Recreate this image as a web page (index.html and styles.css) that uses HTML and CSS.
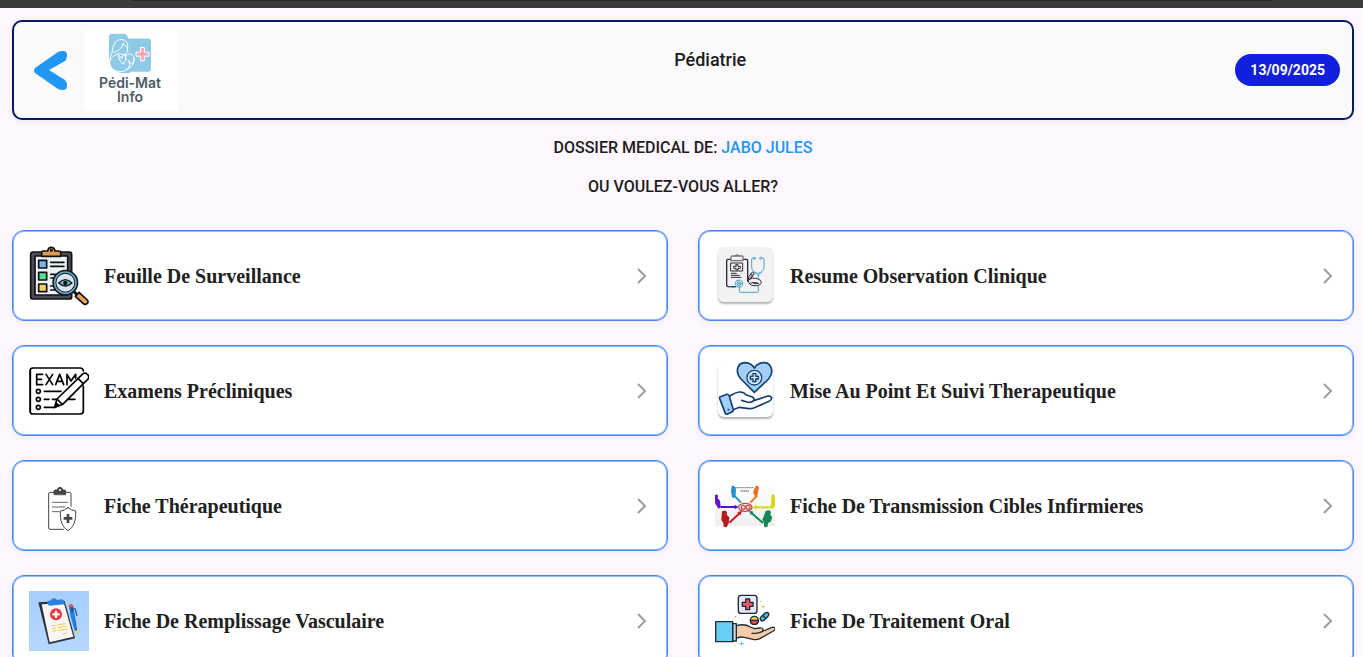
FILE: index.html
```html
<!DOCTYPE html>
<html lang="fr">
<head>
<meta charset="utf-8">
<meta name="viewport" content="width=device-width, initial-scale=1">
<title>Pédiatrie</title>
<link rel="stylesheet" href="styles.css">
</head>
<body>
<div class="topbar"></div>
<header class="header">
  <button class="back" type="button" aria-label="Retour">
    <svg class="back-icon" viewBox="0 0 34 40"><path d="M1 18 24 2q2-1 5-1 4 0 4 4 0 4-2 6L15 20l16 10q2 2 2 6 0 4-4 4-3 0-5-1L1 23q-2-2 0-5z" fill="#2196f3"/></svg>
  </button>
  <div class="logo">
    <svg class="logo-icon" viewBox="327 100 132 122">
      <path d="M330 112q0-10 10-10h34q7 0 11 7l4 7h58q9 0 9 9v82q0 9-9 9h-48q-12 6-28 4-41-5-41-47z" fill="#8ecae6"/>
      <g fill="none" stroke="#fff" stroke-width="3" stroke-linecap="round" stroke-linejoin="round">
        <path d="M386 150q4-29-17-31c-20-1-27 17-28 30-1 14-10 20-9 36"/>
        <path d="M342 157c11 0 28-9 30-27 4 9 15 10 14 20-1 16-18 17-23 10-17 4-31 16-31 29 2 29 44 34 56 15 6-9 6-16 1-23"/>
        <path d="M358 166q8 3 10 10 2-9 10-13-1 10 5 15-8 5-9 15-12-4-16-27z"/>
        <path d="M380 178c-5-22 27-21 25 1-1 12-13 14-18 8M405 177c-1 16-7 26-23 32"/>
      </g>
      <path d="M425 143h11v14h14v12h-14v14h-11v-14h-14v-12h14z" fill="#f4a6b4" stroke="#fff" stroke-width="3"/>
    </svg>
    <span class="logo-text">Pédi-Mat<br>Info</span>
  </div>
  <h1 class="title">Pédiatrie</h1>
  <time class="date" datetime="2025-09-13">13/09/2025</time>
</header>
<main>
  <section class="intro">
    <p>DOSSIER MEDICAL DE: <span class="patient">JABO JULES</span></p>
    <p>OU VOULEZ-VOUS ALLER?</p>
  </section>
  <nav class="cards">
    <a class="card" href="#surveillance">
      <svg class="icon" viewBox="27 28 180 180" stroke="#111" stroke-width="5" stroke-linecap="round" stroke-linejoin="round">
        <rect x="32" y="46" width="123" height="141" rx="7" fill="#4e4a56"/>
        <path d="M45 58h98v117H45z" fill="#eef1f6"/>
        <path d="M65 59v-12q0-4 5-4h13q2-11 11-11t11 11h12q5 0 5 4v12z" fill="#dd9a55"/>
        <circle cx="94" cy="41" r="2"/>
        <rect x="56" y="71" width="24" height="23" fill="#73b7f3"/><rect x="56" y="107" width="24" height="23" fill="#4fe39a"/><rect x="56" y="142" width="24" height="23" fill="#f6d266"/>
        <path d="M92 77h40M92 89h40M92 113h14M92 124h9M92 148h7M92 160h18" fill="none"/>
        <path d="m160 163 12 12" stroke-width="9"/>
        <path d="m166 179 11-12 25 23q5 6-1 11t-12-1z" fill="#e4a264"/>
        <circle cx="136" cy="138" r="33" fill="#dbe4ed" stroke-width="12"/><circle cx="136" cy="138" r="32" fill="none" stroke="#5da9cf" stroke-width="5"/>
        <path d="M116 139q20-20 40 0-20 18-40 0z" fill="#69b6df" stroke-width="4"/><circle cx="136" cy="139" r="4"/>
      </svg>
      <span class="label">Feuille De Surveillance</span>
      <svg class="chevron" viewBox="0 0 16 16"><path d="m3 1 7 7-7 7"/></svg>
    </a>
    <a class="card" href="#observation">
      <span class="icon tile tile-grey"><svg class="tile-art" viewBox="27 28 180 180" fill="none" stroke-linecap="round" stroke-linejoin="round">
        <g stroke="#2b2b38" stroke-width="4">
          <path d="M75 68h-9q-4 0-4 4v73q0 5 4 5h22M111 68h10q4 0 4 4v61"/>
          <path d="M75 72v-10q0-4 4-4h28q4 0 4 4v10z" stroke="#777" fill="#f3f1f5"/><path d="M89 57q5-5 9 0" stroke="#777"/>
          <path d="M75 79h35v24H75z" stroke-width="3"/><path d="M90 84h6v5h7v6h-7v5h-6v-5h-7v-6h7z" stroke-width="3"/>
          <path d="M76 110h15M76 116h24M76 122h29" stroke-width="3"/><path d="M103 110h15" stroke="#bbaab9" stroke-width="1"/>
          <path d="M126 131q13-11 30-4 10 3 10 11-4 11-22 9-15 0-18-16zm0 0 3-12 10-13q5 0 5 6l-10 14zm8 8q11-4 24 1-12 3-17-1" stroke-width="3"/><path d="m133 110 8 11m-10 4 8-12" stroke-width="2"/>
        </g>
        <g stroke="#45a6ca" stroke-width="3"><path d="M142 63q-5 0-5 5v23q0 16 19 19 18-4 18-19V68q0-5-5-5"/><circle cx="145" cy="65" r="3"/><circle cx="164" cy="65" r="3"/><path d="m146 107 10 9 10-9M158 116q-5 7 0 10M157 149v15q0 3-3 3h-50q-4 0-4-4v-12"/><circle cx="99" cy="141" r="11"/><circle cx="99" cy="141" r="6"/><circle cx="99" cy="141" r="2"/><path d="M69 151h5m5 1h8"/></g>
      </svg></span>
      <span class="label">Resume Observation Clinique</span>
      <svg class="chevron" viewBox="0 0 16 16"><path d="m3 1 7 7-7 7"/></svg>
    </a>
    <a class="card" href="#examens">
      <svg class="icon" viewBox="27 28 180 180" fill="none" stroke="#000" stroke-width="5" stroke-linecap="round" stroke-linejoin="round">
        <path d="M190 103v75q0 9-9 9H40q-10 0-10-10V58q0-9 9-9h141q9 0 10 9M31 55v125"/>
        <path d="M68 68H50v31h18M50 83h15M78 68l20 31M98 68 78 99M107 99l12-31 12 31M111 89h16M141 99V68l12 20 14-20v12"/>
        <circle cx="55" cy="119" r="6"/><circle cx="55" cy="143" r="6"/><circle cx="55" cy="167" r="6"/>
        <path d="M73 119h50M73 143h14M97 143h10M73 167h31M145 143h20"/>
        <path d="m104 167 7-25 75-73q8-8 16-1t1 15l-75 75z" fill="#fff"/><path d="m111 142 16 16M174 80l15 15"/><path d="m104 167 6-11 7 6z" fill="#000"/>
      </svg>
      <span class="label">Examens Précliniques</span>
      <svg class="chevron" viewBox="0 0 16 16"><path d="m3 1 7 7-7 7"/></svg>
    </a>
    <a class="card" href="#suivi">
      <span class="icon tile"><svg class="tile-art" viewBox="27 28 180 180" fill="#fff" stroke="#173f70" stroke-width="5" stroke-linecap="round" stroke-linejoin="round">
        <path d="M145 122 105 82C84 57 97 34 116 33q19 0 29 16 11-17 31-16c19 2 30 27 12 49z" fill="#a1d0fc"/>
        <circle cx="145" cy="78" r="22" stroke-width="4"/><circle cx="145" cy="78" r="17" fill="#a1d0fc" stroke="none"/><path d="M141 66h8v8h8v8h-8v8h-8v-8h-8v-8h8z" stroke-width="4" fill="#d7ebff"/>
        <path d="M70 134c12-7 17-12 30-13q13-1 21 9l18 6q8 5 4 11l43-14q11 0 11 7 0 5-8 9l-44 19q-10 5-22 2l-23-3-18 7"/>
        <path d="M143 147q-7 7-20 4l-16-5" fill="none"/>
        <path d="m43 135 20-7q4-1 6 3l13 43q1 4-3 6l-14 7q-5 2-7-2l-17-44q-2-4 2-6z" fill="#a1d0fc"/><path d="M67 174h1"/>
      </svg></span>
      <span class="label">Mise Au Point Et Suivi Therapeutique</span>
      <svg class="chevron" viewBox="0 0 16 16"><path d="m3 1 7 7-7 7"/></svg>
    </a>
    <a class="card" href="#therapeutique">
      <svg class="icon" viewBox="27 28 180 180" fill="none" stroke="#444447" stroke-width="3" stroke-linecap="round" stroke-linejoin="round">
        <path d="M101 77H90q-4 0-4 4v103q0 4 4 4h40M138 77h11q4 0 4 4v38"/>
        <path d="M102 83V73q0-3 4-3h6q1-8 8-8t8 8h5q4 0 4 3v10z" fill="#444447"/><circle cx="120" cy="70" r="3" fill="#fff" stroke="none"/>
        <path d="M97 107h46M97 121h38M97 135h20" stroke="#66666a"/>
        <path d="M144 123q11 9 23 10c1 28-5 48-23 59-18-11-24-31-23-59q12-1 23-10z" fill="#fff"/>
        <path d="M144 142v27M131 155h26" stroke-width="8" stroke-linecap="butt"/>
      </svg>
      <span class="label">Fiche Thérapeutique</span>
      <svg class="chevron" viewBox="0 0 16 16"><path d="m3 1 7 7-7 7"/></svg>
    </a>
    <a class="card" href="#transmission">
      <svg class="icon" viewBox="27 28 180 180">
        <defs><linearGradient id="floor" x1="0" y1="0" x2="0" y2="1"><stop stop-color="#fff"/><stop offset="1" stop-color="#efeeed"/></linearGradient></defs>
        <path d="M27 58h180v120H27z" fill="url(#floor)"/>
        <g fill="none" stroke-width="6"><path d="m84 86 21 22" stroke="#278fc5"/><path d="m153 87-20 21" stroke="#e87220"/><path d="M43 121h50" stroke="#4b18c9"/><path d="M144 122h55" stroke="#d5d917"/><path d="m70 168 34-31" stroke="#c9171d"/><path d="m133 136 38 33" stroke="#178656"/></g>
        <path d="m86 114 12 7-12 7z" fill="#4b18c9"/><path d="m151 115-11 7 11 7z" fill="#d5d917"/><path d="m94 137 14-5-4 14z" fill="#c9171d"/><path d="m129 132 14 3-8 10z" fill="#178656"/>
        <path d="M77 58q6-3 9 2l4 8-1 17-5 9-6-2-3-19z" fill="#278fc5"/><path d="M149 58q9-3 10 5l-3 14-2 12-8-1-5-12z" fill="#e87220"/>
        <path d="M27 85q7-4 9 2l-1 8 7 7 2 18-6 7-8-13-3-5z" fill="#6715c7"/><path d="M197 84q8-3 9 3l1 7v25l-8 8-5-10z" fill="#d5d917"/>
        <path d="M48 134q11-5 15 2l-1 8 8 8-2 18-6 12-9-2-1-11-6-9z" fill="#b81820"/><path d="M179 133q13-6 16 3l-2 8 6 7-5 14-7 3-3 13-9 1-2-16-4-6z" fill="#178656"/>
        <g fill="none" stroke="#c54a4a" stroke-width="4"><ellipse cx="118" cy="122" rx="20" ry="12"/><ellipse cx="112" cy="122" rx="6" ry="6"/><ellipse cx="126" cy="122" rx="6" ry="6"/></g>
        <path d="M87 63h55M104 73h26" stroke="#8a8d94" stroke-width="4" stroke-dasharray="5 1 3 1"/>
      </svg>
      <span class="label">Fiche De Transmission Cibles Infirmieres</span>
      <svg class="chevron" viewBox="0 0 16 16"><path d="m3 1 7 7-7 7"/></svg>
    </a>
    <a class="card" href="#remplissage">
      <svg class="icon" viewBox="27 42 180 180">
        <defs><linearGradient id="sky" x1="0" y1="0" x2="0" y2="1"><stop stop-color="#a5cffd"/><stop offset="1" stop-color="#b6d7fd"/></linearGradient></defs>
        <path d="M27 42h180v180H27z" fill="url(#sky)"/>
        <path d="m55 76 79-4 31 112-79 18z" fill="#2c323d"/><path d="m65 82 67-3 28 100-71 17z" fill="#fbf5f4"/>
        <path d="m82 73 11-3q2-8 10-6 6 1 7 5l15-2q8 2 9 9l-1 6-45 4q-8-4-6-13z" fill="#2c82de"/>
        <circle cx="108" cy="112" r="18" fill="#ed3340"/><path d="M108 101v22M97 112h22" stroke="#fff" stroke-width="7"/>
        <path d="m94 147 12-2m6-1 25-4M95 155l12-2m6-1 26-4M97 163l12-2m6-1 27-4M129 171l12-3" stroke="#f1ca56" stroke-width="3"/>
        <path d="m147 88 12-4 11 66 2 15-8-5z" fill="#2558a5"/><path d="m149 107 12-2 7 51-5 1z" fill="#1688ed"/><path d="m146 84 10-4 4 9-12 4z" fill="#e3504d"/><path d="m160 94 6 2 5 21" fill="none" stroke="#2460ba" stroke-width="4"/><path d="m166 161 7 12 2-8-3-6z" fill="#f3cf3d"/>
      </svg>
      <span class="label">Fiche De Remplissage Vasculaire</span>
      <svg class="chevron" viewBox="0 0 16 16"><path d="m3 1 7 7-7 7"/></svg>
    </a>
    <a class="card" href="#oral">
      <svg class="icon" viewBox="27 42 180 180" stroke="#222b34" stroke-width="4" stroke-linecap="round" stroke-linejoin="round">
        <rect x="97" y="55" width="56" height="54" rx="8" fill="#e1e8f3"/><path d="M119 66h12v10h10v12h-10v10h-12V88h-10V76h10z" fill="#f1576b"/>
        <path d="M91 146c14-4 28-5 42 4l12 5 16-2q10-1 10 5t-8 8l33-14q8-4 11 1 2 5-5 9l-39 22q-10 6-22 3l-26-6q-10-3-24 3z" fill="#f7cbaa"/><path d="M163 166q-11 4-25 3" fill="none"/>
        <path d="M80 140h11v52H80z" fill="#d5dae9"/><path d="M29 134h51v60H29z" fill="#67cef4"/>
        <circle cx="145" cy="130" r="12" fill="#f0cf47"/><path d="M133 130h24q-1 12-12 12t-12-12z" fill="#e75067"/>
        <path d="m165 120 12-12q8-4 11 2 2 5-3 9l-11 11q-6 4-10-1-3-5 1-9z" fill="#43bce5"/><path d="m171 115 8 9"/>
        <g fill="none" stroke-width="3"><path d="M171 84v9m-5-4h10" stroke="#f2c45b"/><path d="M107 194v11m-6-5h12" stroke="#60c4ed"/><path d="M89 118v2" stroke="#ef6179"/><path d="M163 73v1" stroke="#77c95b"/><path d="M86 206h2" stroke="#f2c45b"/></g>
      </svg>
      <span class="label">Fiche De Traitement Oral</span>
      <svg class="chevron" viewBox="0 0 16 16"><path d="m3 1 7 7-7 7"/></svg>
    </a>
  </nav>
</main>
</body>
</html>
```
FILE: styles.css
```css
* { box-sizing: border-box; }
html { scrollbar-width: none; }
body {
  margin: 0;
  background: #fef7ff;
  color: #1d1b20;
  font-family: Roboto, "Liberation Sans", sans-serif;
}
.topbar {
  height: 8px;
  padding: 0 92px 0 132px;
  background: linear-gradient(#262626, #262626) content-box 0 0 / 100% 1px no-repeat, #3b3b3b;
}
.header {
  display: flex;
  align-items: center;
  height: 100px;
  margin: 12px 9px 0 12px;
  padding: 0 12px 0 20px;
  background: #fafafa;
  border: 2px solid #021b61;
  border-radius: 10px;
  box-shadow: 0 2px 6px rgba(0, 0, 0, 0.06);
}
.back {
  display: flex;
  padding: 0;
  margin-right: 16px;
  border: 0;
  background: none;
  cursor: pointer;
}
.back-icon { width: 34px; height: 40px; }
.logo {
  display: flex;
  flex-direction: column;
  align-items: center;
  width: 94px;
  height: 80px;
  padding: 3px 2px 0 0;
  background: #fff;
}
.logo-icon { width: 44px; height: 41px; flex: none; }
.logo-text {
  margin-top: 2px;
  font: 600 14px/14px Inter, sans-serif;
  color: #4d5b66;
  text-align: center;
}
.title {
  flex: 1;
  margin: 0 0 20px 7px;
  font-size: 18px;
  line-height: 24px;
  font-weight: 500;
  text-align: center;
}
.date {
  padding: 0 15px;
  border-radius: 16px;
  background: #1020dc;
  color: #fff;
  font-size: 14px;
  line-height: 32px;
  font-weight: 700;
}
.intro {
  display: grid;
  gap: 15px;
  padding: 16px 9px 31px 12px;
  font-size: 16px;
  line-height: 24px;
  font-weight: 500;
  text-align: center;
}
.intro p { margin: 0; }
.patient { color: #2196f3; }
.cards {
  display: grid;
  grid-template-columns: 1fr 1fr;
  gap: 24px 30px;
  padding: 0 9px 24px 12px;
}
.card {
  display: flex;
  align-items: center;
  gap: 15px;
  min-height: 91px;
  padding: 14px 16px;
  border: 1px solid #4386f0;
  border-radius: 12px;
  background: #fff;
  box-shadow: inset 0 0 0 1px #94bbf9, 0 2px 6px rgba(0, 0, 0, 0.05);
  color: #212121;
  text-decoration: none;
}
.icon { width: 60px; height: 60px; flex: none; }
.tile { display: flex; position: relative; }
.tile::before {
  content: "";
  position: absolute;
  inset: 1px 2px 4px 3px;
  border-radius: 6px;
  background: #fff;
  box-shadow: 0 2px 2px rgba(0, 0, 0, 0.3);
}
.tile-grey::before { background: #f3f1f4; }
.tile-art { position: relative; width: 60px; height: 60px; }
.label {
  flex: 1;
  font: 700 20px/28px "Liberation Serif", serif;
}
.chevron {
  width: 16px;
  height: 16px;
  fill: none;
  stroke: #9e9e9e;
  stroke-width: 2;
}
```
